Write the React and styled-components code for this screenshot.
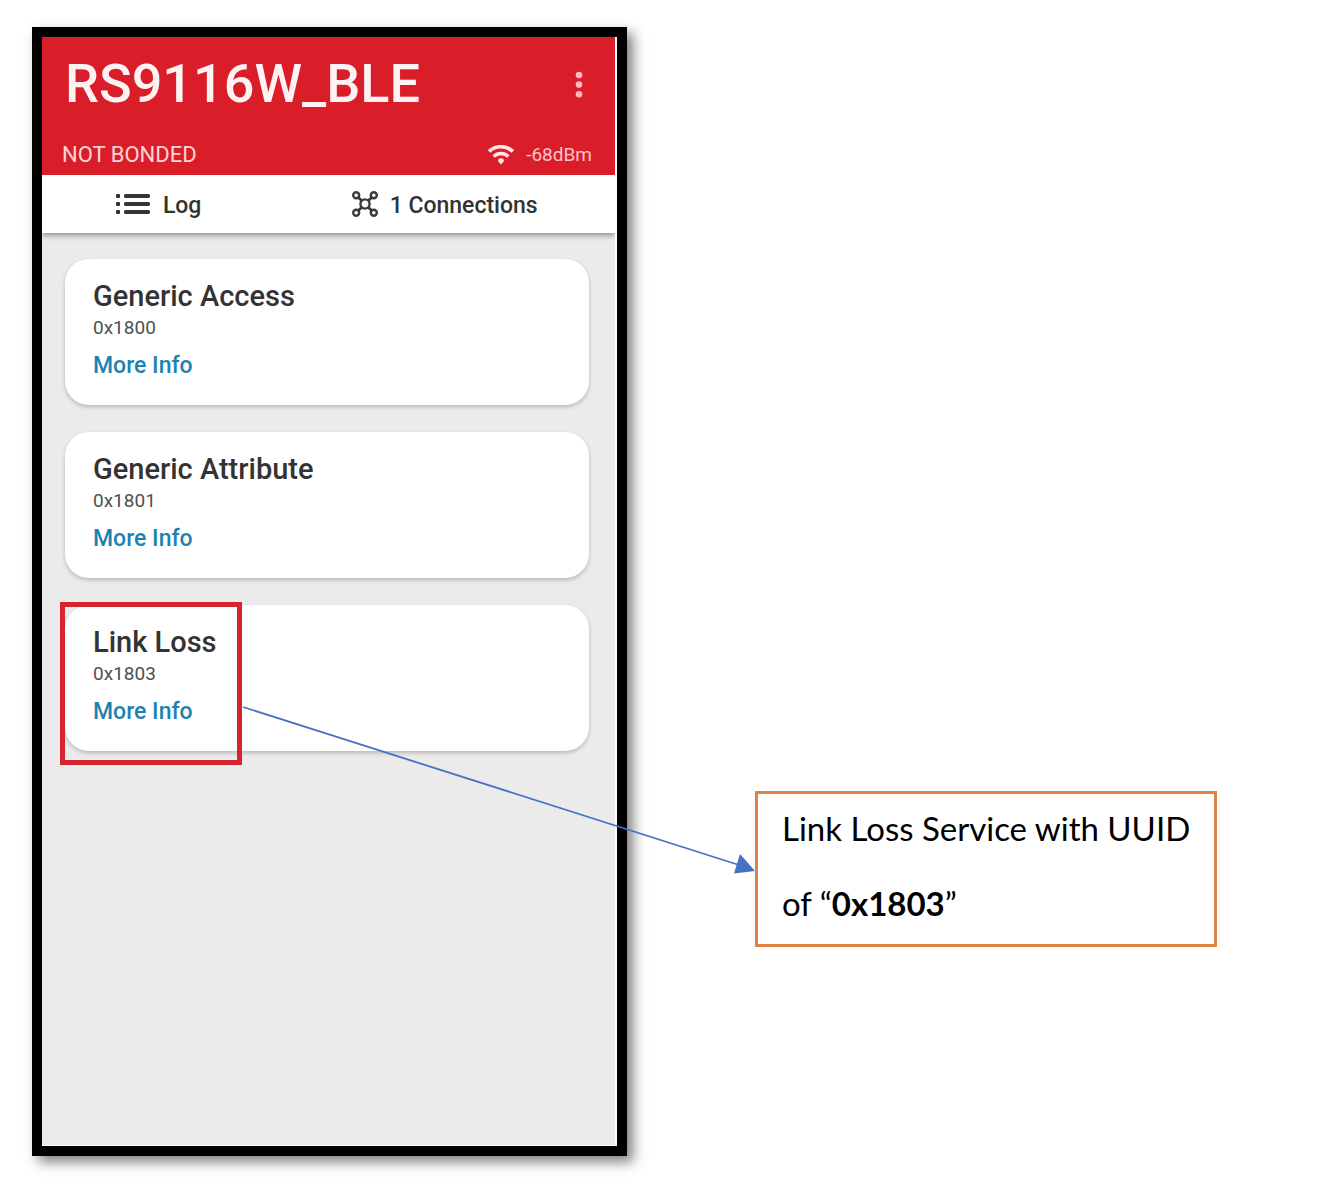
import React from "react";
import styled, { createGlobalStyle } from "styled-components";

const GlobalStyle = createGlobalStyle`
  *, *::before, *::after { box-sizing: border-box; }
  body {
    margin: 0;
    background: #ffffff;
    font-family: Roboto, "Liberation Sans", sans-serif;
    color: #333333;
  }
  button { font: inherit; color: inherit; background: none; border: 0; padding: 0; cursor: pointer; }
  h1, h2, p { margin: 0; }
`;

const Page = styled.main`
  display: flex;
  gap: 128px;
  min-height: 100vh;
  padding: 27px 32px 41px;
`;

const Phone = styled.section`
  flex: 0 1 595px;
  display: flex;
  flex-direction: column;
  border: 10px solid #000000;
  background: #ffffff;
  padding: 0 2px 1px 0;
  box-shadow: 6px 6px 12px rgba(0, 0, 0, 0.5);
`;

const Header = styled.header`
  display: flex;
  flex-direction: column;
  justify-content: space-between;
  height: 138px;
  padding: 12px 23px 7px 20px;
  background: #d91e2a;
  color: #ffe6e8;
`;

const HeaderRow = styled.div`
  display: flex;
  align-items: center;
  justify-content: space-between;
`;

const DeviceName = styled.h1`
  padding-left: 3px;
  font-size: 54px;
  font-weight: 500;
  line-height: 70px;
  color: #fff2f3;
`;

const MenuButton = styled.button`
  display: flex;
  justify-content: center;
  width: 26px;
  padding-top: 2px;
`;

const BondState = styled.span`
  font-size: 22px;
  line-height: 26px;
  color: #ffd5d8;
`;

const Signal = styled.span`
  display: flex;
  align-items: center;
  gap: 12px;
  font-size: 19px;
  line-height: 26px;
  color: #ffc2c7;
`;

const Tabs = styled.nav`
  position: relative;
  display: flex;
  height: 58px;
  background: #ffffff;
  box-shadow: 0 2px 6px rgba(0, 0, 0, 0.45);
  clip-path: inset(0 0 -12px 0);
`;

const Tab = styled.button`
  flex: ${(p) => p.$grow} 1 0;
  display: flex;
  align-items: center;
  justify-content: center;
  gap: 12px;
  font-size: 23px;
  font-weight: 500;
  line-height: 26px;
`;

const TabLabel = styled.span`
  padding-top: 3px;
`;

const Services = styled.div`
  flex: 1;
  display: flex;
  flex-direction: column;
  gap: 27px;
  padding: 26px 26px 26px 23px;
  background: #ebebeb;
`;

const Card = styled.article`
  position: relative;
  display: flex;
  flex-direction: column;
  align-items: flex-start;
  height: 146px;
  padding: 20px 28px;
  border-radius: 24px;
  background: #ffffff;
  box-shadow: 0 2px 4px rgba(0, 0, 0, 0.22);
`;

const ServiceName = styled.h2`
  font-size: 29px;
  font-weight: 500;
  line-height: 35px;
`;

const ServiceId = styled.p`
  font-size: 19px;
  line-height: 28px;
  color: #505050;
`;

const MoreInfo = styled.a`
  margin-top: 10px;
  font-size: 23px;
  font-weight: 500;
  line-height: 28px;
  color: #1e82b0;
  text-decoration: none;
`;

const Highlight = styled.div`
  position: absolute;
  top: -3px;
  left: -5px;
  width: 182px;
  height: 163px;
  border: 5px solid #d5232f;
  pointer-events: none;
`;

const Arrow = styled.svg`
  position: absolute;
  top: 102px;
  left: 178px;
  z-index: 1;
  overflow: visible;
  pointer-events: none;
`;

const Callout = styled.aside`
  flex: 0 1 462px;
  align-self: flex-start;
  display: flex;
  flex-direction: column;
  gap: 35px;
  margin-top: 764px;
  padding: 14px 16px 21px 24px;
  border: 3px solid #dd8344;
  font-family: Lato, "Open Sans", sans-serif;
  font-size: 33px;
  line-height: 40px;
  color: #000000;
`;

const MoreIcon = () => (
  <svg width="8" height="28" viewBox="0 0 8 28" fill="#ffb9bf" aria-hidden="true">
    <circle cx="4" cy="4" r="3.3" />
    <circle cx="4" cy="13.6" r="3.3" />
    <circle cx="4" cy="23.2" r="3.3" />
  </svg>
);

const WifiIcon = () => (
  <svg width="26" height="20" viewBox="0 0 26 20" fill="none" stroke="#ffe3e5" aria-hidden="true">
    <path d="M1 6.4C8 0.2 18 0.2 25 6.4" strokeWidth="3.7" />
    <path d="M5.6 11.4C10 7.5 16 7.5 20.4 11.4" strokeWidth="3.3" />
    <path d="M13 13.2a3 3 0 0 1 3 2.8L13 19.6 10 16a3 3 0 0 1 3-2.8z" fill="#ffe3e5" stroke="none" />
  </svg>
);

const ListIcon = () => (
  <svg width="36" height="20" viewBox="0 0 36 20" fill="#333333" aria-hidden="true">
    {[0, 8, 16].map((y) => (
      <g key={y}>
        <rect x="1" y={y} width="4" height="4" rx="1" />
        <rect x="9" y={y} width="26" height="4" rx="1.6" />
      </g>
    ))}
  </svg>
);

const ConnectionsIcon = () => (
  <svg width="26" height="26" viewBox="0 0 26 26" fill="none" stroke="#3b3b3b" strokeWidth="2.4" aria-hidden="true">
    <circle cx="13" cy="13" r="4.6" />
    <circle cx="4.2" cy="4.2" r="3" />
    <circle cx="21.8" cy="4.2" r="3" />
    <circle cx="4.2" cy="21.8" r="3" />
    <circle cx="21.8" cy="21.8" r="3" />
    <path d="M6.4 6.4l3.4 3.4M19.6 6.4l-3.4 3.4M6.4 19.6l3.4-3.4M19.6 19.6l-3.4-3.4" strokeWidth="2.8" />
  </svg>
);

const CalloutArrow = () => (
  <Arrow width="513" height="166" viewBox="0 0 513 166" aria-hidden="true">
    <path d="M0 0L496 158" stroke="#4472c4" strokeWidth="1.8" fill="none" />
    <path d="M512 164L497 147L491 166.500Z" fill="#4472c4" />
  </Arrow>
);

const services = [
  { name: "Generic Access", id: "0x1800" },
  { name: "Generic Attribute", id: "0x1801" },
  { name: "Link Loss", id: "0x1803", highlighted: true },
];

export default function App() {
  return (
    <>
      <GlobalStyle />
      <Page>
        <Phone>
          <Header>
            <HeaderRow>
              <DeviceName>RS9116W_BLE</DeviceName>
              <MenuButton aria-label="More options">
                <MoreIcon />
              </MenuButton>
            </HeaderRow>
            <HeaderRow>
              <BondState>NOT BONDED</BondState>
              <Signal>
                <WifiIcon />
                -68dBm
              </Signal>
            </HeaderRow>
          </Header>
          <Tabs>
            <Tab $grow={15}>
              <ListIcon />
              <TabLabel>Log</TabLabel>
            </Tab>
            <Tab $grow={22}>
              <ConnectionsIcon />
              <TabLabel>1 Connections</TabLabel>
            </Tab>
          </Tabs>
          <Services>
            {services.map((service) => (
              <Card key={service.id}>
                <ServiceName>{service.name}</ServiceName>
                <ServiceId>{service.id}</ServiceId>
                <MoreInfo href="#more-info">More Info</MoreInfo>
                {service.highlighted && (
                  <>
                    <Highlight />
                    <CalloutArrow />
                  </>
                )}
              </Card>
            ))}
          </Services>
        </Phone>
        <Callout>
          <p>Link Loss Service with UUID</p>
          <p>
            of “<strong>0x1803</strong>”
          </p>
        </Callout>
      </Page>
    </>
  );
}
